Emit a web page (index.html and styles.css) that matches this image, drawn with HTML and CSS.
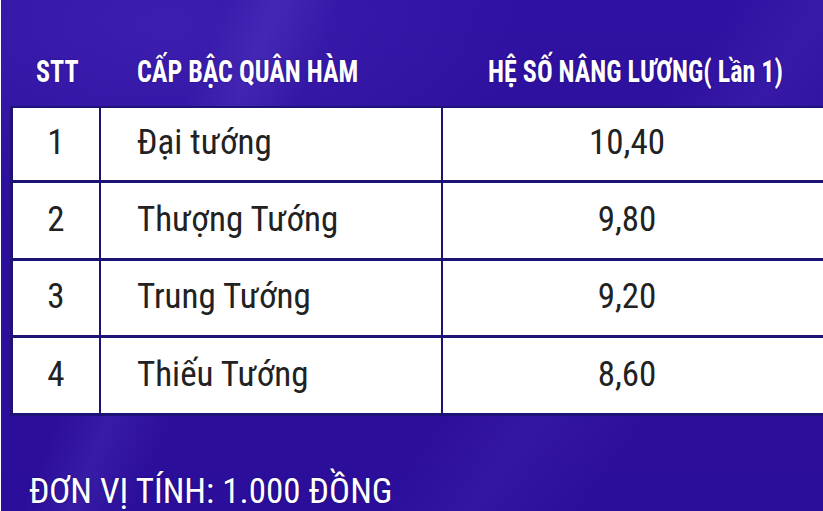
FILE: index.html
```html
<!DOCTYPE html>
<html lang="vi"><head><meta charset="utf-8"><link rel="stylesheet" href="styles.css"></head>
<body>
<div class="page">
  <div class="thead">
    <div class="h c1"><span class="ht">STT</span></div>
    <div class="h c2"><span class="ht">CẤP BẬC QUÂN HÀM</span></div>
    <div class="h c3"><span class="ht">HỆ SỐ NÂNG LƯƠNG( Lần 1)</span></div>
  </div>
  <div class="tbody">
    <div class="row r1"><div class="d c1">1</div><div class="d c2">Đại tướng</div><div class="d c3">10,40</div></div>
    <div class="row r2"><div class="d c1">2</div><div class="d c2">Thượng Tướng</div><div class="d c3">9,80</div></div>
    <div class="row r3"><div class="d c1">3</div><div class="d c2">Trung Tướng</div><div class="d c3">9,20</div></div>
    <div class="row r4"><div class="d c1">4</div><div class="d c2">Thiếu Tướng</div><div class="d c3">8,60</div></div>
  </div>
  <div class="foot">ĐƠN VỊ TÍNH: 1.000 ĐỒNG</div>
</div>
</body></html>
```
FILE: styles.css
```css
html,body{margin:0;padding:0}
body{width:823px;height:511px;overflow:hidden;background:#fff}
.page{
  width:822px;height:511px;margin-left:1px;overflow:hidden;
  background:
    linear-gradient(112deg, rgba(255,255,255,0) 22%, rgba(130,110,235,0.14) 27%, rgba(255,255,255,0) 33%),
    linear-gradient(125deg, rgba(255,255,255,0) 62%, rgba(120,100,230,0.10) 70%, rgba(255,255,255,0) 80%),
    radial-gradient(ellipse 45% 35% at 20% 5%, rgba(70,40,185,0.6) 0%, rgba(70,40,185,0) 100%),
    linear-gradient(180deg,#3012a2 0%,#2d0f9d 50%,#2b0e9a 100%);
  font-family:"Roboto Condensed","Roboto",sans-serif;
  padding-top:36px;box-sizing:border-box;
}
.thead{
  display:grid;grid-template-columns:89px 343px 1fr;
  height:70px;align-items:center;margin-left:9px;
}
.h{color:#fff;font-weight:700;font-size:31px;text-shadow:0 0 2px rgba(20,0,80,0.6);white-space:nowrap}
.ht{display:inline-block;transform:scaleX(0.84)}
.h.c1{text-align:center;padding-left:6px}
.h.c2{padding-left:38px}
.h.c2 .ht{transform-origin:left center}
.h.c3{text-align:center;padding-left:6px}
.tbody{
  margin-left:9px;width:830px;background:#fff;
  border:3px solid #1d1276;border-right:none;border-top-width:2px;
}
.row{display:grid;grid-template-columns:88px 342px 1fr;border-bottom:3px solid #1d1276;align-items:center}
.row:last-child{border-bottom:none}
.r1{height:72px}
.r2{height:75px}
.r3{height:74px}
.r4{height:75px}
.d{font-size:35px;font-weight:400;color:#222;height:100%;display:flex;align-items:center;padding-bottom:3px;box-sizing:border-box}
.d.c1{justify-content:center;border-right:2px solid #1d1276}
.d.c2{padding-left:36px;border-right:2px solid #1d1276}
.d.c3{justify-content:center;padding-right:32px}
.foot{
  color:#fff;font-size:35px;line-height:1;margin-left:28px;margin-top:58px;
  text-shadow:0 0 2px rgba(20,0,80,0.6);
}
```
